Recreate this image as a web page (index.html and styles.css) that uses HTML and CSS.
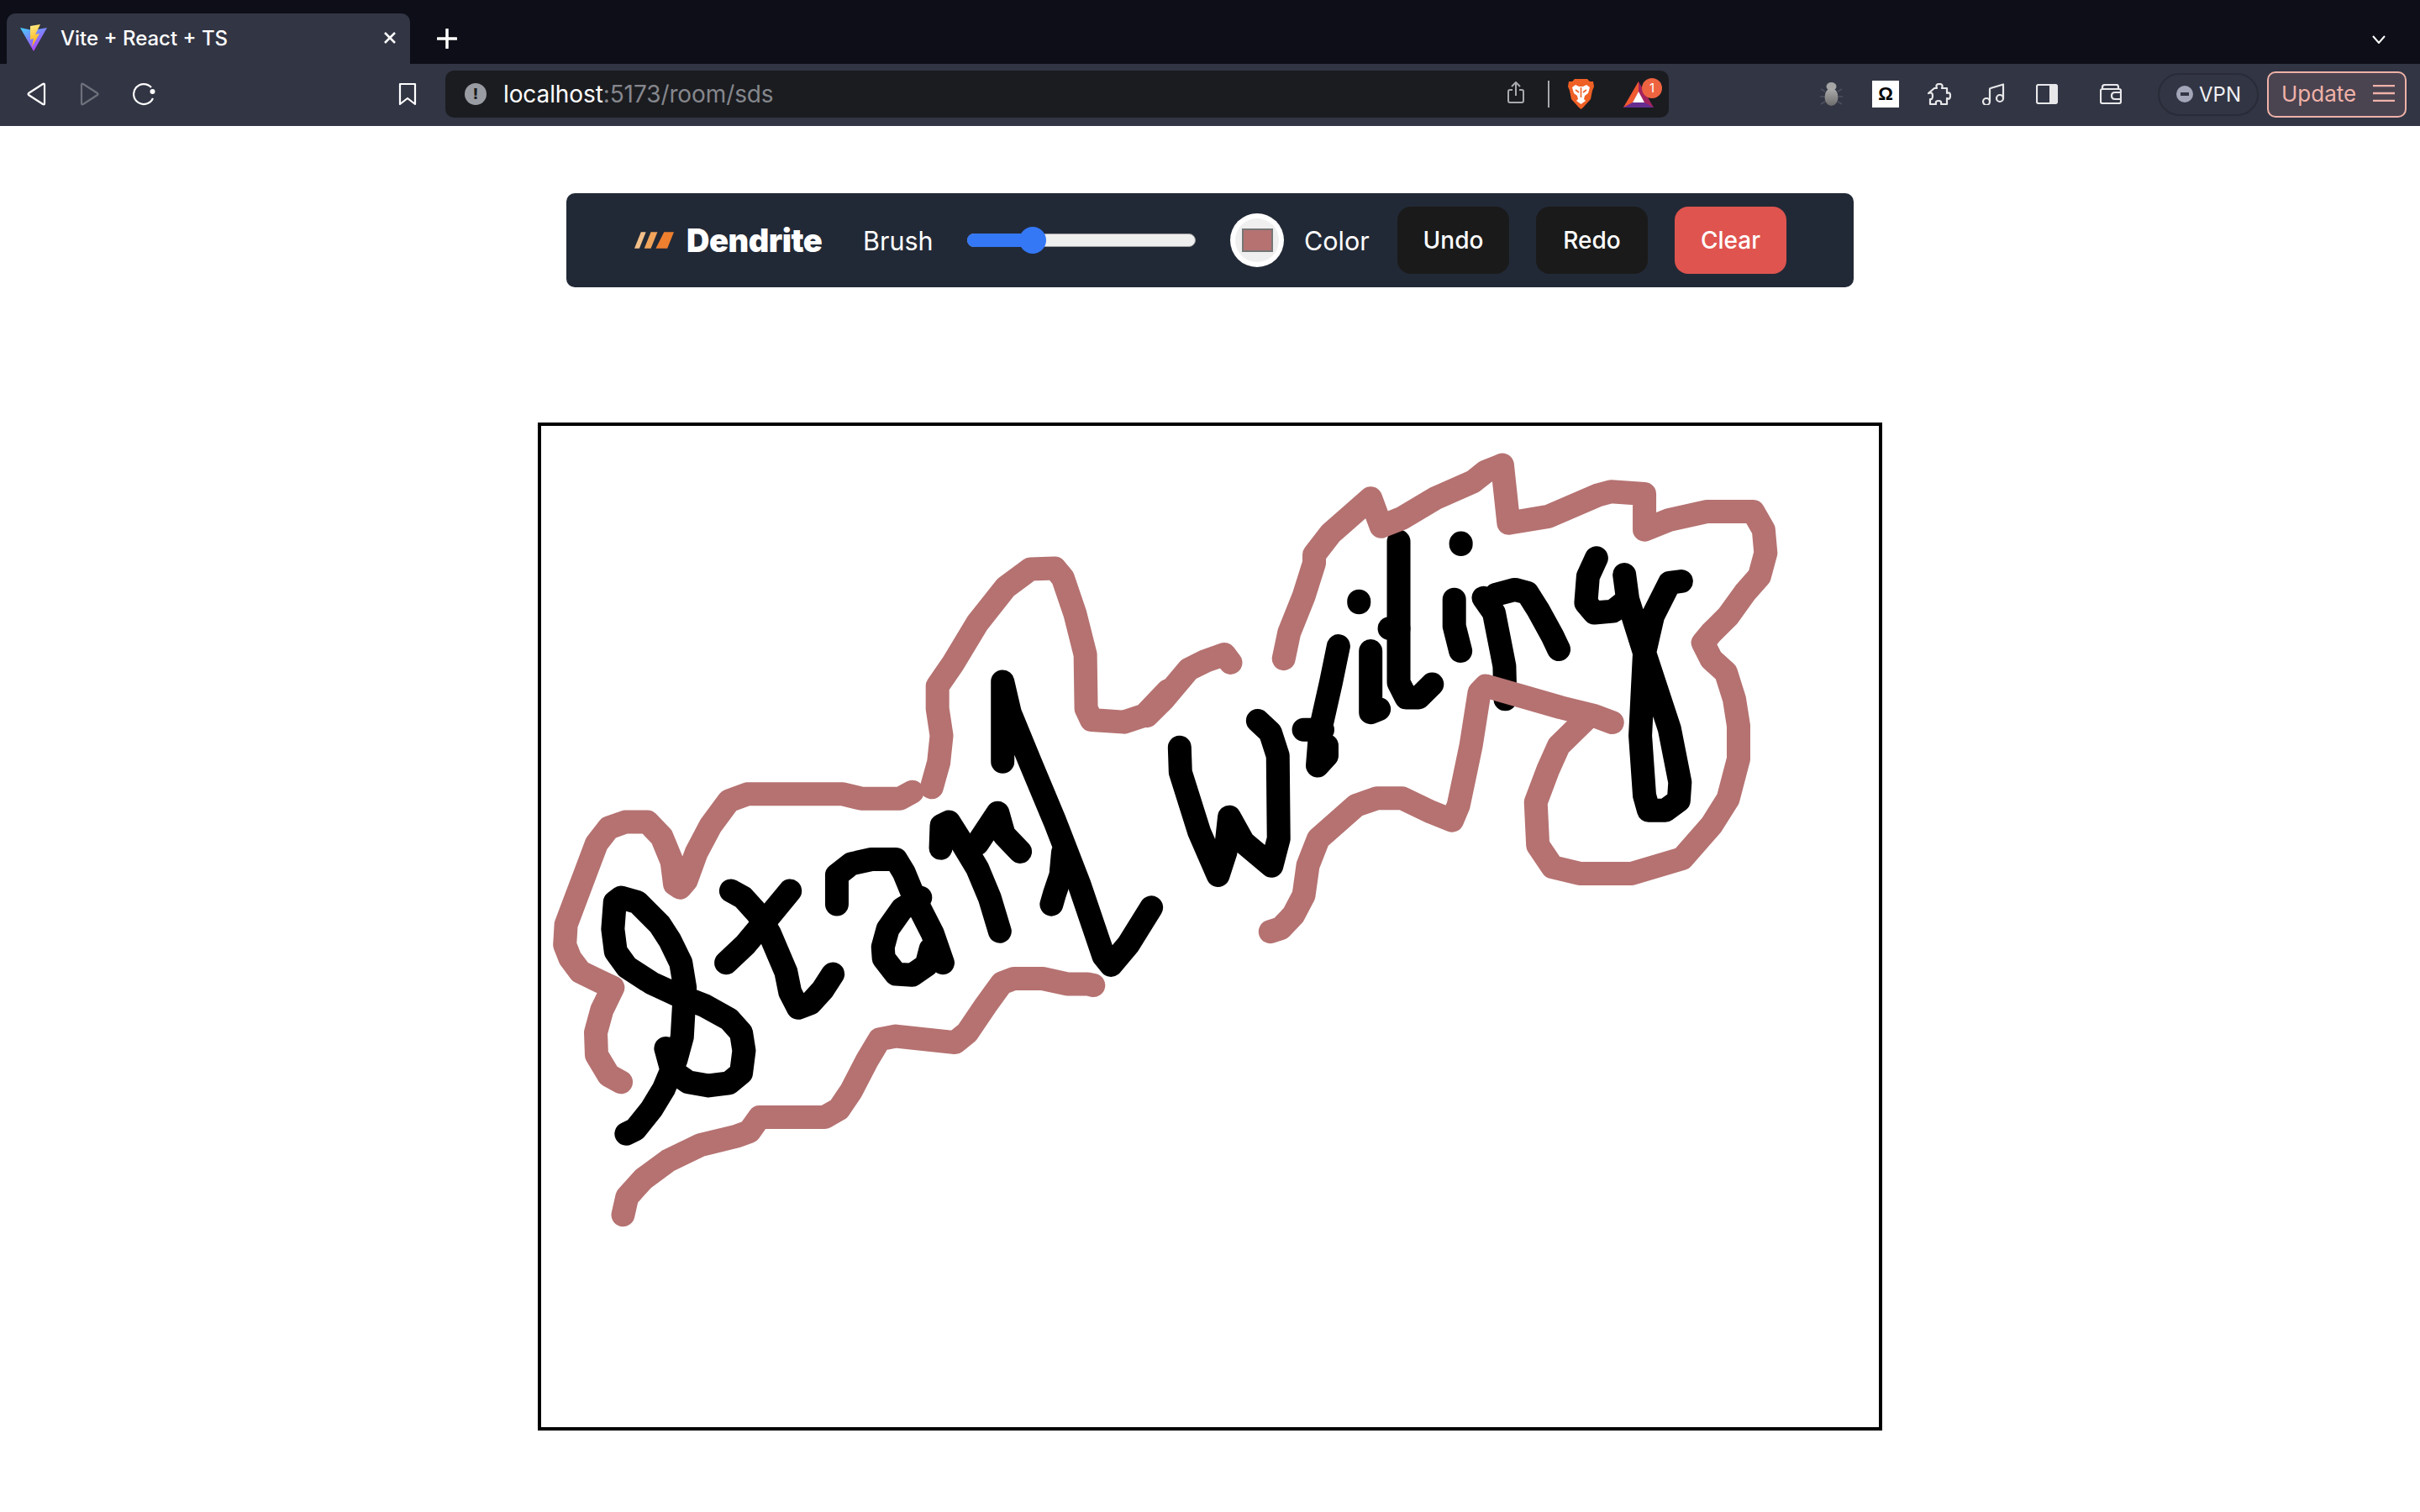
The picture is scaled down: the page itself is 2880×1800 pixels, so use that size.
FILE: index.html
```html
<!DOCTYPE html>
<html lang="en">
<head>
  <meta charset="UTF-8" />
  <title>Vite + React + TS</title>
  <link rel="stylesheet" href="styles.css">
</head>
<body>
  <div class="tabstrip">
    <div class="tab">
      <svg class="favicon" viewBox="0 0 32 32">
        <defs>
          <linearGradient id="vite-bg" x1="0" y1="0" x2="0.7" y2="1">
            <stop offset="0" stop-color="#41d1ff"/>
            <stop offset="1" stop-color="#bd34fe"/>
          </linearGradient>
          <linearGradient id="vite-bolt" x1="0.3" y1="0" x2="0.5" y2="1">
            <stop offset="0" stop-color="#ffea83"/>
            <stop offset="1" stop-color="#ffa800"/>
          </linearGradient>
        </defs>
        <path d="M0 4 L15 7 L32 4 L16 32 Z" fill="url(#vite-bg)"/>
        <path d="M24 0 L12 2 L12 18 L16 17 L14 27 L23 11 L18 12 Z" fill="url(#vite-bolt)"/>
      </svg>
      <span class="tab-title">Vite + React + TS</span>
      <svg class="tab-close" viewBox="0 0 16 16"><path d="M2 2 L14 14 M14 2 L2 14"/></svg>
    </div>
    <svg class="new-tab" viewBox="0 0 24 24"><path d="M12 1 V23 M1 12 H23"/></svg>
    <svg class="tab-list" viewBox="0 0 16 10"><path d="M1 1 L8 9 L15 1"/></svg>
  </div>

  <div class="navbar">
    <svg class="nav-icon" viewBox="0 0 28 28"><path d="M24 3 V25 Q24 27 22 26 L5 15 Q4 14 5 13 L22 2 Q24 1 24 3 Z"/></svg>
    <svg class="nav-icon dim" viewBox="0 0 28 28"><path d="M4 3 V25 Q4 27 6 26 L23 15 Q24 14 23 13 L6 2 Q4 1 4 3 Z"/></svg>
    <svg class="nav-icon" viewBox="0 0 28 28"><path d="M25 19 A12 12 0 1 1 23 6"/><circle class="solid" cx="24.5" cy="11" r="3"/></svg>
    <svg class="nav-icon bookmark" viewBox="0 0 28 28"><path d="M5 2 H23 V26 L14 19 L5 26 Z"/></svg>

    <div class="urlbar">
      <span class="info-dot">!</span>
      <span class="url"><b>localhost</b>:5173/room/sds</span>
      <svg class="share" viewBox="0 0 20 27"><path d="M10 17 V1 M5 6 L10 1 L15 6 M6 10 H3 Q1 10 1 12 V23 Q1 25 3 25 H17 Q19 25 19 23 V12 Q19 10 17 10 H14"/></svg>
      <span class="url-sep"></span>
      <svg class="brave" viewBox="0 0 31 36">
        <path d="M8 0 H23 L26 3 L30 3 L31 9 L29 14 L27 24 L18 34 L15.5 36 L13 34 L4 24 L2 14 L0 9 L1 3 L5 3 Z" fill="#ef6025"/>
        <path d="M9 7 L13 9 H18 L22 7 L26 10 L24 17 L20 20 L19 24 L21 26 L15.5 30 L10 26 L12 24 L11 20 L7 17 L5 10 Z" fill="#fff"/>
        <path d="M9 13 L13 16 M22 13 L18 16 M15.5 10 V22" stroke="#ef6025" stroke-width="1.6" fill="none"/>
      </svg>
      <span class="rewards">
        <svg viewBox="0 0 36 31">
          <path d="M18 0 L36 31 H0 Z" fill="#a3235f"/>
          <path d="M18 0 L0 31 L11 25 L18 12 Z" fill="#ef5a30"/>
          <path d="M11 25 H25 L36 31 H0 Z" fill="#662d91"/>
          <path d="M18 12 L11 25 H25 Z" fill="#fff"/>
        </svg>
        <span class="badge">1</span>
      </span>
    </div>

    <div class="ext-icons">
      <svg class="ext bug" viewBox="0 0 27 28">
        <defs>
          <linearGradient id="bug-fill" x1="0" y1="0" x2="0" y2="1">
            <stop offset="0" stop-color="#adadad"/>
            <stop offset="1" stop-color="#6c6c6c"/>
          </linearGradient>
        </defs>
        <path d="M6 11 L1 8 M21 11 L26 8 M5 17 H0 M22 17 H27 M6 23 L1 26 M21 23 L26 26" stroke="#4e505c" stroke-width="1.5"/>
        <ellipse cx="13.5" cy="5" rx="6" ry="5" fill="#a5a5a5"/>
        <ellipse cx="13.5" cy="17.5" rx="8" ry="10.5" fill="url(#bug-fill)"/>
      </svg>
      <span class="omega">Ω</span>
      <svg class="ext line puzzle" viewBox="0 0 28 27"><path d="M8 6 H11 Q9 1 14 1 Q19 1 17 6 H23 V12 Q27 10 27 15 Q27 20 23 18 V25 H16 Q17 21 13 21 Q9 21 10 25 H3 V19 Q6 20 6 15 Q6 10 1 12 Z"/></svg>
      <svg class="ext line music" viewBox="0 0 27 26"><path d="M9 22 V7 Q9 6 10 6 L25 1.5 V18"/><circle cx="5" cy="22" r="4"/><circle cx="21" cy="18" r="4"/></svg>
      <svg class="ext line panel" viewBox="0 0 26 24"><rect x="1" y="1" width="24" height="22" rx="2"/><rect class="solid" x="16" y="1" width="9" height="22"/></svg>
      <svg class="ext line wallet" viewBox="0 0 26 24"><path d="M3 6 V4 Q3 1 6 1 H20 Q22 1 22 4 V6 M1 8 Q1 6 3 6 H23 Q25 6 25 8 V21 Q25 23 23 23 H3 Q1 23 1 21 Z M25 10 H18 Q14 10 14 14 Q14 18 18 18 H25"/></svg>
    </div>

    <div class="vpn"><span class="vpn-dot"></span>VPN</div>
    <div class="update">
      <span>Update</span>
      <svg viewBox="0 0 26 20"><path d="M0 1 H26 M0 10 H26 M0 19 H26"/></svg>
    </div>
  </div>

  <main class="page">
    <div class="toolbar">
      <svg class="logo" viewBox="0 0 48 20">
        <path d="M8 0 H14 L6 20 H0 Z" fill="#f4c08a"/>
        <path d="M20 0 H28 L20 20 H12 Z" fill="#f2a45a"/>
        <path d="M36 0 H48 L40 20 H26 Z" fill="#ee7f2f"/>
      </svg>
      <span class="brand">Dendrite</span>
      <span class="label brush-label">Brush</span>
      <div class="slider"><div class="slider-fill"></div><div class="slider-thumb"></div></div>
      <div class="swatch"><div class="swatch-inner"><div class="swatch-color"></div></div></div>
      <span class="label color-label">Color</span>
      <button class="btn">Undo</button>
      <button class="btn">Redo</button>
      <button class="btn btn-clear">Clear</button>
    </div>

    <svg class="board" width="1592" height="1192" viewBox="644 507 1592 1192">
      <g class="ink black sx">
        <polyline points="238,1325 260,1315 300,1270 330,1225 360,1160 375,1110 382,1000 372,945 345,895 320,860 265,810 225,800 210,810 205,870 212,920 240,955 300,990 360,1015 430,1040 490,1070 520,1100 527,1140 520,1190 490,1212 440,1218 390,1210 350,1185 335,1135"/>
        <polyline points="495,785 525,800 560,835 590,880 630,965 640,1010 660,1045 690,1035 720,1005 745,970"/>
        <polyline points="640,785 590,840 530,905 483,945"/>
        <polyline points="755,815 755,750 790,725 840,715 900,715 920,745 945,800 990,880 1015,945"/>
        <polyline points="960,800 915,825 880,870 868,910 870,935 900,970 940,972 975,950 985,915"/>
        <polyline points="1010,690 1012,640 1030,632 1060,675 1100,735 1130,800 1155,875"/>
        <polyline points="1100,680 1150,612 1165,660 1205,698"/>
        <polyline points="1162,498 1162,320 1180,390 1230,500 1290,630 1350,770 1410,930 1428,950 1470,905 1527,822"/>
        <polyline points="1282,815 1290,790 1305,750 1310,700"/>
      </g>
      <g class="ink black wr">
        <polyline points="68,935 70,1010 115,1190 160,1320 178,1250 187,1145 220,1220 288,1292 305,1210 303,960 285,890 255,855"/>
        <polyline points="448,630 430,740 405,880 398,990 420,960 420,930"/>
        <polyline points="365,882 410,882"/>
        <polyline points="525,645 525,830 545,820"/>
        <polyline points="497,495 497,499"/>
        <polyline points="592,315 592,740 610,785 640,785 672,745"/>
        <polyline points="570,577 592,577"/>
        <polyline points="725,490 725,570 740,645"/>
        <polyline points="741,320 741,324"/>
        <polyline points="795,485 820,530 845,690 847,790"/>
        <polyline points="825,475 870,460 900,470 925,520 960,600 975,640"/>
        <polyline points="1065,365 1045,420 1040,500 1060,530 1105,525 1130,500"/>
        <polyline points="1132,415 1140,490 1180,650 1240,880 1265,1040 1262,1095 1230,1125 1190,1125 1180,1080 1170,900 1180,650 1200,540 1240,440 1268,435"/>
      </g>
      <g class="ink rose sx">
        <polyline points="225,1210 195,1195 165,1150 163,1100 178,1050 205,1000 170,985 125,965 100,935 87,905 90,860 115,800 140,740 165,680 195,645 235,632 290,632 325,665 350,720 357,770 370,778 385,762 410,700 445,640 490,585 535,570 770,570 815,580 910,580 940,565"/>
        <polyline points="988,555 1005,500 1012,440 1002,380 1002,330 1040,280 1100,190 1170,110 1230,70 1290,68 1310,90 1340,170 1365,260 1367,380 1380,405 1460,410 1510,395 1568,340"/>
        <polyline points="1385,995 1370,992 1320,992 1260,980 1190,980 1160,990 1120,1040 1075,1100 1045,1122 900,1108 860,1115 830,1160 790,1230 760,1270 725,1288 565,1288 540,1320 510,1330 420,1350 340,1385 280,1425 240,1465 230,1505"/>
      </g>
      <g class="ink rose wr">
        <polyline points="-10,840 30,790 90,700 130,675 175,655 190,680"/>
        <polyline points="317,668 330,590 365,480 390,380 390,355 430,290 525,185 550,270 600,245 680,185 770,135 800,105 840,85 855,260 950,240 1070,175 1100,165 1180,172 1180,280 1240,250 1330,225 1440,225 1465,280 1470,350 1455,420 1420,470 1380,540 1340,590 1320,620 1340,670 1375,710 1395,790 1405,870 1405,970 1380,1090 1340,1170 1270,1270 1150,1315 1025,1315 960,1295 925,1230 920,1100 950,1000 975,930 1040,850"/>
        <polyline points="1103,860 1060,840 980,815 800,750 785,770 765,930 750,1020 735,1110 720,1155 670,1130 600,1088 540,1088 490,1110 400,1210 375,1290 365,1380 340,1440 310,1480 285,1490"/>
      </g>
    </svg>
  </main>
</body>
</html>
```

FILE: styles.css
```css
* {
  box-sizing: border-box;
}
body {
  margin: 0;
  background: #fff;
  font-family: Inter, "Liberation Sans", sans-serif;
}

/* browser chrome */
.tabstrip {
  height: 76px;
  background: #0d0e17;
  display: flex;
  align-items: flex-end;
  padding-left: 8px;
}
.tab {
  width: 480px;
  height: 60px;
  background: #323544;
  border-radius: 10px 10px 0 0;
  display: flex;
  align-items: center;
  padding: 0 16px 2px 16px;
  color: #fff;
}
.favicon {
  width: 32px;
  height: 32px;
  flex: none;
}
.tab-title {
  margin-left: 16px;
  font-size: 24px;
  font-weight: 500;
  flex: 1;
  white-space: nowrap;
}
.tab-close {
  width: 16px;
  height: 16px;
  stroke: #fff;
  stroke-width: 2.5;
  fill: none;
}
.new-tab {
  width: 24px;
  height: 24px;
  margin: 0 0 18px 32px;
  stroke: #fff;
  stroke-width: 3.5;
  stroke-linecap: round;
  fill: none;
}
.tab-list {
  width: 16px;
  height: 10px;
  margin: 0 41px 24px auto;
  stroke: #fff;
  stroke-width: 2;
  fill: none;
}

.navbar {
  height: 74px;
  background: #323544;
  display: flex;
  align-items: center;
  padding: 0 0 2px 29px;
}
.nav-icon {
  width: 28px;
  height: 28px;
  margin-right: 36px;
  stroke: #fff;
  stroke-width: 2.2;
  stroke-linejoin: round;
  fill: none;
  flex: none;
}
.nav-icon.dim {
  stroke: #6e707b;
}
.solid {
  fill: #fff;
  stroke: none;
}
.nav-icon.bookmark {
  margin: 0 31px 0 250px;
}
.urlbar {
  width: 1456px;
  height: 56px;
  background: #1b1c20;
  border-radius: 10px;
  display: flex;
  align-items: center;
  padding-left: 23px;
  flex: none;
}
.info-dot {
  width: 26px;
  height: 26px;
  border-radius: 50%;
  background: #9a9ca3;
  color: #1b1c20;
  font-size: 18px;
  font-weight: 800;
  text-align: center;
  line-height: 26px;
  flex: none;
}
.url {
  margin-left: 20px;
  font-size: 28px;
  color: #85878d;
  flex: 1;
  white-space: nowrap;
  letter-spacing: -0.1px;
}
.url b {
  color: #fff;
  font-weight: 400;
}
.share {
  width: 20px;
  height: 27px;
  margin-bottom: 3px;
  stroke: #a9aaae;
  stroke-width: 2;
  fill: none;
  flex: none;
}
.url-sep {
  width: 2px;
  height: 32px;
  background: #a9a9ad;
  margin-left: 28px;
}
.brave {
  width: 31px;
  height: 36px;
  margin-left: 22px;
  flex: none;
}
.rewards {
  width: 46px;
  height: 31px;
  margin: 0 8px 0 35px;
  position: relative;
  flex: none;
}
.rewards svg {
  width: 36px;
  height: 31px;
  display: block;
}
.badge {
  position: absolute;
  left: 22px;
  top: -4px;
  width: 24px;
  height: 24px;
  border-radius: 50%;
  background: #ee6440;
  color: #fff;
  font-size: 15px;
  text-align: center;
  line-height: 24px;
}
.ext-icons {
  display: flex;
  align-items: center;
  padding-left: 180px;
  flex: none;
}
.ext {
  flex: none;
}
.ext.bug {
  width: 27px;
  height: 28px;
}
.ext.line {
  stroke: #e8e8ea;
  stroke-width: 2.2;
  stroke-linejoin: round;
  fill: none;
}
.ext.line .solid {
  fill: #e8e8ea;
}
.ext.puzzle {
  width: 28px;
  height: 27px;
  margin-left: 34px;
}
.ext.music {
  width: 27px;
  height: 26px;
  margin-left: 37px;
}
.ext.panel {
  width: 26px;
  height: 24px;
  margin-left: 37px;
}
.ext.wallet {
  width: 26px;
  height: 24px;
  margin-left: 50px;
}
.omega {
  width: 32px;
  height: 32px;
  background: #fff;
  color: #000;
  font-family: "Liberation Sans", sans-serif;
  font-size: 22px;
  font-weight: 700;
  text-align: center;
  line-height: 32px;
  margin-left: 35px;
  flex: none;
}
.vpn {
  width: 120px;
  height: 51px;
  margin-left: 43px;
  border: 2px solid #292b38;
  border-radius: 26px;
  display: flex;
  align-items: center;
  padding-left: 20px;
  color: #f0f0f3;
  font-size: 24px;
  flex: none;
}
.vpn-dot {
  width: 20px;
  height: 20px;
  border-radius: 50%;
  background: #a2a6b8;
  margin-right: 7px;
  position: relative;
}
.vpn-dot::after {
  content: "";
  position: absolute;
  left: 5px;
  top: 8px;
  width: 10px;
  height: 4px;
  background: #323544;
}
.update {
  width: 166px;
  height: 55px;
  margin-left: 10px;
  border: 2px solid #efb2a8;
  border-radius: 10px;
  background: #4a4350;
  display: flex;
  align-items: center;
  justify-content: space-between;
  padding: 0 12px 2px 15px;
  color: #efb2a8;
  font-size: 26px;
  flex: none;
}
.update svg {
  width: 26px;
  height: 20px;
  stroke: #efb2a8;
  stroke-width: 2.4;
  fill: none;
}

/* app */
.page {
  display: flex;
  flex-direction: column;
  align-items: center;
  padding-top: 80px;
}
.toolbar {
  width: 1532px;
  height: 112px;
  background: #222936;
  border-radius: 10px;
  display: flex;
  align-items: center;
  color: #fff;
  padding-left: 81px;
}
.logo {
  width: 47px;
  height: 20px;
  flex: none;
}
.brand {
  margin-left: 15px;
  font-size: 38px;
  font-weight: 900;
  letter-spacing: -0.5px;
  width: 210px;
}
.label {
  font-size: 30.5px;
  font-weight: 400;
}
.brush-label {
  width: 124px;
}
.slider {
  width: 272px;
  height: 16px;
  background: #efefef;
  border: 1px solid #a0a0a0;
  border-radius: 8px;
  position: relative;
  flex: none;
}
.slider-fill {
  position: absolute;
  left: -1px;
  top: -1px;
  width: 80px;
  height: 16px;
  background: #3478f6;
  border-radius: 8px 0 0 8px;
}
.slider-thumb {
  position: absolute;
  left: 61px;
  top: -9px;
  width: 32px;
  height: 32px;
  border-radius: 50%;
  background: #3478f6;
}
.swatch {
  width: 64px;
  height: 64px;
  border-radius: 50%;
  background: #fff;
  margin-left: 41px;
  display: flex;
  align-items: center;
  justify-content: center;
  flex: none;
}
.swatch-inner {
  width: 52px;
  height: 52px;
  border-radius: 50%;
  background: #efefef;
  display: flex;
  align-items: center;
  justify-content: center;
}
.swatch-color {
  width: 37px;
  height: 28px;
  background: #b57271;
  border: 2px solid #767676;
}
.color-label {
  margin-left: 24px;
  width: 111px;
}
.btn {
  width: 133px;
  height: 80px;
  border: 0;
  border-radius: 16px;
  background: #1a1a1a;
  color: #fff;
  font-family: inherit;
  font-size: 28px;
  font-weight: 500;
  margin-right: 32px;
  padding: 0;
  flex: none;
}
.btn-clear {
  background: #df544f;
  margin-right: 0;
}
.board {
  box-sizing: content-box;
  margin-top: 161px;
  border: 4px solid #000;
  background: #fff;
  display: block;
}

/* strokes are traced per region, then scaled back to page pixels */
.ink polyline {
  fill: none;
  stroke-width: 28;
  stroke-linecap: round;
  stroke-linejoin: round;
  vector-effect: non-scaling-stroke;
}
.ink.black polyline {
  stroke: #000;
}
.ink.rose polyline {
  stroke: #b57271;
}
.ink.sx {
  transform: translate(630px, 640px) scale(0.4847, 0.5357);
}
.ink.wr {
  transform: translate(1370px, 520px) scale(0.4975, 0.3954);
}
```
